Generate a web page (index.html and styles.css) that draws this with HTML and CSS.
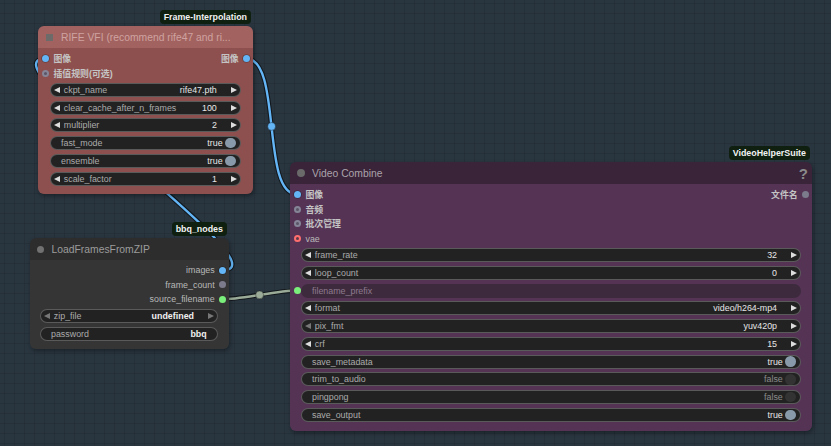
FILE: index.html
```html
<!DOCTYPE html>
<html>
<head>
<meta charset="utf-8">
<link rel="stylesheet" href="styles.css">
</head>
<body>
<div class="canvas">
  <svg class="links" width="831" height="446" viewBox="0 0 831 446">
    <g fill="none" stroke-linecap="round">
      <path class="lk-bg" d="M222.3,270.3 C291,270.3 -23,58.5 46,58.5"/>
      <path class="lk-img" d="M222.3,270.3 C291,270.3 -23,58.5 46,58.5"/>
      <path class="lk-bg" d="M246,58.5 C282.5,58.5 260.5,194.3 297,194.3"/>
      <path class="lk-img" d="M246,58.5 C282.5,58.5 260.5,194.3 297,194.3"/>
      <path class="lk-bg" d="M222.3,299.3 C241,299.3 278,290.5 297,290.5"/>
      <path class="lk-str" d="M222.3,299.3 C241,299.3 278,290.5 297,290.5"/>
    </g>
    <circle class="mid-img" cx="271.6" cy="126.4" r="3.9"/>
    <circle class="mid-str" cx="259.6" cy="294.9" r="3.9"/>
  </svg>

  <!-- RIFE VFI -->
  <div class="node rife">
    <div class="badge">Frame-Interpolation</div>
    <div class="title">
      <span class="box"></span>
      <span class="ttext">RIFE VFI (recommend rife47 and ri...</span>
    </div>
    <div class="body">
      <div class="slots">
        <div class="row">
          <div class="in"><span class="dot img"></span><span class="slbl cjk">图像</span></div>
          <div class="out"><span class="slbl cjk">图像</span><span class="dot img"></span></div>
        </div>
        <div class="row">
          <div class="in"><span class="dot ring grey"></span><span class="slbl cjk">插值规则(可选)</span></div>
        </div>
      </div>
      <div class="widgets">
        <div class="w"><span class="al"></span><span class="lbl">ckpt_name</span><span class="val">rife47.pth</span><span class="ar"></span></div>
        <div class="w"><span class="al"></span><span class="lbl">clear_cache_after_n_frames</span><span class="val">100</span><span class="ar"></span></div>
        <div class="w"><span class="al"></span><span class="lbl">multiplier</span><span class="val">2</span><span class="ar"></span></div>
        <div class="w tog"><span class="lbl">fast_mode</span><span class="val">true</span><span class="knob on"></span></div>
        <div class="w tog"><span class="lbl">ensemble</span><span class="val">true</span><span class="knob on"></span></div>
        <div class="w"><span class="al"></span><span class="lbl">scale_factor</span><span class="val">1</span><span class="ar"></span></div>
      </div>
    </div>
  </div>

  <!-- LoadFramesFromZIP -->
  <div class="node lf">
    <div class="badge">bbq_nodes</div>
    <div class="title">
      <span class="cdot"></span>
      <span class="ttext">LoadFramesFromZIP</span>
    </div>
    <div class="body">
      <div class="slots">
        <div class="row"><div></div><div class="out"><span class="slbl">images</span><span class="dot img"></span></div></div>
        <div class="row"><div></div><div class="out"><span class="slbl">frame_count</span><span class="dot grey"></span></div></div>
        <div class="row"><div></div><div class="out"><span class="slbl">source_filename</span><span class="dot green"></span></div></div>
      </div>
      <div class="widgets">
        <div class="w"><span class="al dim"></span><span class="lbl">zip_file</span><span class="val strong">undefined</span><span class="ar dim"></span></div>
        <div class="w tog"><span class="lbl">password</span><span class="val strong txt">bbq</span></div>
      </div>
    </div>
  </div>

  <!-- Video Combine -->
  <div class="node vc">
    <div class="badge">VideoHelperSuite</div>
    <div class="title">
      <span class="cdot"></span>
      <span class="ttext">Video Combine</span>
      <span class="help">?</span>
    </div>
    <div class="body">
      <div class="slots">
        <div class="row">
          <div class="in"><span class="dot img"></span><span class="slbl cjk">图像</span></div>
          <div class="out"><span class="slbl cjk">文件名</span><span class="dot grey"></span></div>
        </div>
        <div class="row"><div class="in"><span class="dot ring grey"></span><span class="slbl cjk">音频</span></div></div>
        <div class="row"><div class="in"><span class="dot ring grey"></span><span class="slbl cjk">批次管理</span></div></div>
        <div class="row"><div class="in"><span class="dot ring red"></span><span class="slbl">vae</span></div></div>
      </div>
      <div class="widgets">
        <div class="w"><span class="al"></span><span class="lbl">frame_rate</span><span class="val">32</span><span class="ar"></span></div>
        <div class="w"><span class="al"></span><span class="lbl">loop_count</span><span class="val">0</span><span class="ar"></span></div>
        <div class="w conv"><span class="dot green wdot"></span><span class="lbl">filename_prefix</span></div>
        <div class="w"><span class="al"></span><span class="lbl">format</span><span class="val">video/h264-mp4</span><span class="ar"></span></div>
        <div class="w"><span class="al dim"></span><span class="lbl">pix_fmt</span><span class="val">yuv420p</span><span class="ar"></span></div>
        <div class="w"><span class="al"></span><span class="lbl">crf</span><span class="val">15</span><span class="ar"></span></div>
        <div class="w tog"><span class="lbl">save_metadata</span><span class="val">true</span><span class="knob on"></span></div>
        <div class="w tog"><span class="lbl">trim_to_audio</span><span class="val off">false</span><span class="knob"></span></div>
        <div class="w tog"><span class="lbl">pingpong</span><span class="val off">false</span><span class="knob"></span></div>
        <div class="w tog"><span class="lbl">save_output</span><span class="val">true</span><span class="knob on"></span></div>
      </div>
    </div>
  </div>
</div>
</body>
</html>
```

FILE: styles.css
```css
html, body {
  margin: 0;
  padding: 0;
}
body {
  width: 831px;
  height: 446px;
  overflow: hidden;
  font-family: "Liberation Sans", Arial, "Noto Sans CJK SC", sans-serif;
}
.canvas {
  position: relative;
  width: 831px;
  height: 446px;
  background-color: #29353f;
  background-image:
    linear-gradient(rgba(0, 0, 0, 0.09) 1px, transparent 1px),
    linear-gradient(90deg, rgba(0, 0, 0, 0.09) 1px, transparent 1px);
  background-size: 10px 10px;
  background-position: 4px 3px;
  overflow: hidden;
}
.links {
  position: absolute;
  left: 0;
  top: 0;
}
.lk-bg {
  stroke: rgba(0, 0, 0, 0.55);
  stroke-width: 4.6;
}
.lk-img {
  stroke: #64b5f6;
  stroke-width: 2.4;
}
.lk-str {
  stroke: #9aab97;
  stroke-width: 2.4;
}
.mid-img {
  fill: #64b5f6;
  stroke: rgba(0, 0, 0, 0.4);
  stroke-width: 0.8;
}
.mid-str {
  fill: #9aab97;
  stroke: rgba(0, 0, 0, 0.4);
  stroke-width: 0.8;
}

/* nodes */
.node {
  position: absolute;
  border-radius: 6px;
  box-shadow: 1px 2px 4px rgba(0, 0, 0, 0.35);
  font-size: 8.9px;
}
.rife { left: 38px; top: 26px; width: 215px; }
.lf { left: 30px; top: 238px; width: 199px; }
.vc { left: 290px; top: 162px; width: 522px; }

.badge {
  position: absolute;
  right: 2px;
  bottom: calc(100% + 2px);
  height: 14px;
  line-height: 14px;
  padding: 0 4px;
  border-radius: 4px;
  background: #0f1f10;
  color: #f2f2f2;
  font-weight: bold;
  font-size: 8.9px;
  white-space: nowrap;
}

.title {
  height: 22px;
  display: flex;
  align-items: center;
  border-radius: 6px 6px 0 0;
  font-size: 10.35px;
  white-space: nowrap;
  position: relative;
}
.body {
  border-radius: 0 0 6px 6px;
  padding: 3px 0 8.5px;
}
.rife .title { background: #a2625f; color: #cfa3a1; padding-left: 8px; }
.rife .body { background: #8d504e; }
.lf .title { background: #2d2d2d; color: #9c9c9c; padding-left: 6.5px; }
.lf .body { background: #353535; }
.vc .title { background: #3a2439; color: #aba3ab; padding-left: 7px; }
.vc .body { background: #553355; padding-bottom: 9px; }

.box {
  width: 7px;
  height: 7px;
  background: #6d6a6a;
  margin-right: 8px;
}
.cdot {
  width: 8px;
  height: 8px;
  border-radius: 50%;
  background: #6a6a6a;
  margin-right: 7px;
}
.lf .cdot {
  width: 7px;
  height: 7px;
  background: #717171;
  margin-right: 8px;
}
.help {
  position: absolute;
  right: 4px;
  top: 3px;
  font-size: 15px;
  font-weight: bold;
  color: #8a8a8a;
}

/* slots */
.slots {
  display: flex;
  flex-direction: column;
}
.row {
  height: 14.8px;
  display: flex;
  justify-content: space-between;
  align-items: center;
}
.lf .row { height: 14.6px; }
.in, .out {
  display: flex;
  align-items: center;
  color: #b8b8b8;
  white-space: nowrap;
}
.slbl.cjk { font-weight: bold; color: #c4c4c4; }
.in .dot { margin-left: 4px; margin-right: 4.5px; }
.out .dot { margin-left: 3.8px; margin-right: 3.5px; }
.dot {
  width: 7px;
  height: 7px;
  border-radius: 50%;
  box-sizing: border-box;
  flex: none;
}
.dot.img { background: #64b5f6; box-shadow: 0 0 0 0.6px rgba(0, 0, 0, 0.35); }
.dot.grey { background: #7b7b8c; }
.dot.green { background: #7bef7b; }
.dot.ring.grey { background: #5a5566; border: 2px solid #858597; }
.dot.ring.red { background: #5e3a4a; border: 2px solid #ff6e6e; }

/* widgets */
.widgets {
  display: flex;
  flex-direction: column;
  gap: 3.76px;
  padding: 0 12.5px 0 12px;
  margin-top: 2.3px;
}
.vc .widgets { padding: 0 11.3px 0 11px; margin-top: 1.9px; }
.lf .widgets { padding: 0 11.3px 0 10px; margin-top: 2.2px; }
.w {
  height: 14px;
  box-sizing: border-box;
  border: 1px solid rgba(110, 110, 110, 0.75);
  border-radius: 7px;
  background: #222;
  display: flex;
  align-items: center;
  white-space: nowrap;
  position: relative;
}
.al {
  flex: none;
  width: 0;
  height: 0;
  margin-left: 3.3px;
  border-top: 3.5px solid transparent;
  border-bottom: 3.5px solid transparent;
  border-right: 6.5px solid #dddddd;
}
.ar {
  flex: none;
  width: 0;
  height: 0;
  margin-right: 2.7px;
  margin-left: 14px;
  border-top: 3.5px solid transparent;
  border-bottom: 3.5px solid transparent;
  border-left: 6.5px solid #dddddd;
}
.al.dim { border-right-color: #777; }
.ar.dim { border-left-color: #777; }
.lbl {
  color: #ababab;
  margin-left: 3.5px;
}
.tog .lbl, .conv .lbl { margin-left: 10px; }
.val {
  flex: 1;
  text-align: right;
  color: #e6e6e6;
}
.val.strong { color: #f0f0f0; font-weight: bold; }
.val.txt { margin-right: 10px; }
.val.off { color: #8a8a8a; }
.knob {
  flex: none;
  width: 10.6px;
  height: 10.6px;
  border-radius: 50%;
  background: #333;
  margin-left: 2.5px;
  margin-right: 3.8px;
}
.knob.on { background: #8899aa; }
.w.conv {
  border-color: transparent;
  background: rgba(34, 34, 34, 0.45);
}
.w.conv .lbl { color: #8d7a8e; }
.wdot {
  position: absolute;
  left: -8.5px;
  top: 2.5px;
}
```
